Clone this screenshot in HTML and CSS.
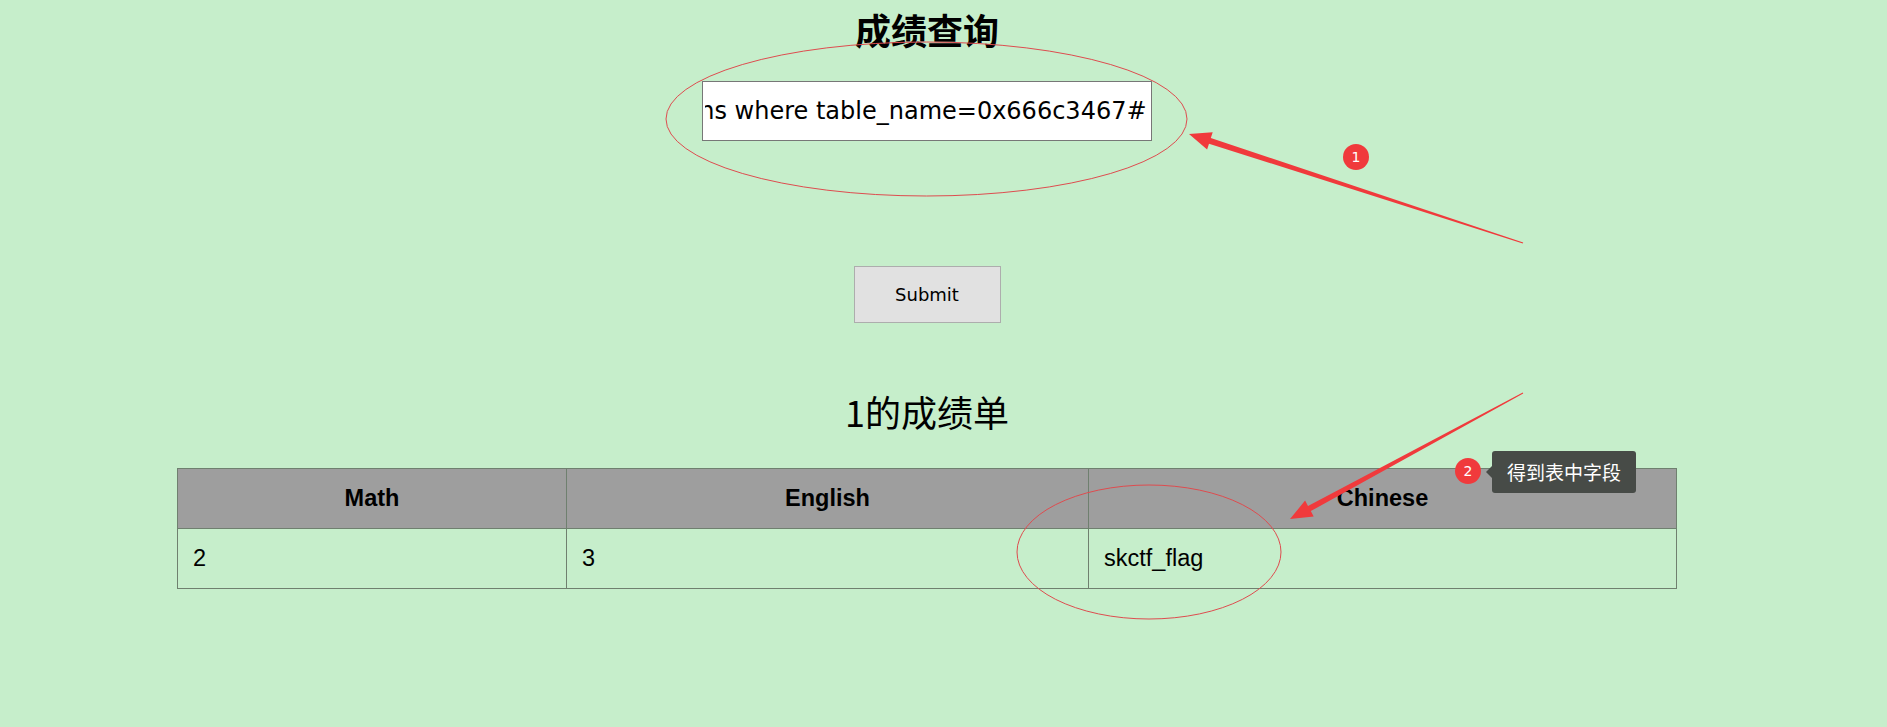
FILE: index.html
```html
<!DOCTYPE html>
<html lang="zh-CN">
<head>
    <meta charset="UTF-8">
    <title>成绩查询</title>
    <link rel="stylesheet" href="styles.css">
</head>
<body>
    <div class="page">
        <h1 class="title">成绩查询</h1>
        <form class="query-form" onsubmit="return false">
            <input type="text" id="query" class="query-input" value="1' union select 1,2,group_concat(column_name) from information_schema.columns where table_name=0x666c3467#">
            <button type="submit" class="submit-btn">Submit</button>
        </form>
        <h2 class="result-title">1的成绩单</h2>
        <table class="scores">
            <colgroup>
                <col class="col-math">
                <col class="col-english">
                <col class="col-chinese">
            </colgroup>
            <tr>
                <th>Math</th>
                <th>English</th>
                <th>Chinese</th>
            </tr>
            <tr>
                <td>2</td>
                <td>3</td>
                <td>skctf_flag</td>
            </tr>
        </table>
    </div>

    <!-- screenshot annotations -->
    <svg class="marks" width="1887" height="727" viewBox="0 0 1887 727">
        <ellipse cx="926.5" cy="119" rx="260.5" ry="77" fill="none" stroke="#de4c4f" stroke-width="1"/>
        <ellipse cx="1149" cy="552" rx="132" ry="67" fill="none" stroke="#de4c4f" stroke-width="1"/>
        <polygon fill="#f03a3c" points="1523.2,242.5 1210.8,138 1212.7,132.2 1189,134 1207.1,149.4 1209,143.7 1522.8,243.5"/>
        <polygon fill="#f03a3c" points="1522.8,392.6 1308,505.9 1305.1,500.6 1290,519 1313.7,516.4 1310.8,511.1 1523.2,393.4"/>
    </svg>
    <span class="badge badge-one">1</span>
    <span class="badge badge-two">2</span>
    <div class="tip">得到表中字段</div>

    <script>
        var q = document.getElementById('query');
        q.scrollLeft = q.scrollWidth;
    </script>
</body>
</html>
```

FILE: styles.css
```css
body {
    margin: 0;
    background-color: #c6eecb;
    color: #000;
    font-family: "Liberation Sans", "Noto Sans CJK SC", sans-serif;
}
.page {
    width: 1854px;
    height: 727px;
    display: flex;
    flex-direction: column;
    align-items: center;
}
.title {
    margin: 7px 0 0;
    font-size: 36px;
    line-height: 44px;
    font-weight: bold;
    font-family: "Noto Sans CJK SC", sans-serif;
}
.query-form {
    display: flex;
    flex-direction: column;
    align-items: center;
}
.query-input {
    margin-top: 30px;
    width: 450px;
    height: 60px;
    box-sizing: border-box;
    padding: 0 4px 0 2px;
    border: 1px solid #777;
    background: #fff;
    font-family: "DejaVu Sans", sans-serif;
    font-size: 24px;
    color: #000;
    outline: none;
}
.submit-btn {
    margin-top: 125px;
    width: 147px;
    height: 57px;
    border: 1px solid #adadad;
    background: #e1e1e1;
    font-family: "DejaVu Sans", sans-serif;
    font-size: 18px;
    color: #000;
}
.result-title {
    margin: 66px 0 0;
    font-size: 36px;
    line-height: 44px;
    font-weight: normal;
    font-family: "Noto Sans CJK SC", sans-serif;
}
.scores {
    margin-top: 35px;
    width: 1499px;
    border-collapse: collapse;
    table-layout: fixed;
    font-size: 23.5px;
}
.col-math { width: 389px; }
.col-english { width: 522px; }
.col-chinese { width: 588px; }
.scores th, .scores td {
    height: 59px;
    padding: 0 15px;
    border: 1px solid #6f806f;
}
.scores th {
    background: #9e9e9e;
    font-weight: bold;
    text-align: center;
}
.scores td {
    text-align: left;
}
.marks {
    position: absolute;
    top: 0;
    left: 0;
    pointer-events: none;
}
.badge {
    position: absolute;
    width: 26px;
    height: 26px;
    border-radius: 50%;
    background: #f03a3c;
    color: #fff;
    font-family: "DejaVu Sans", sans-serif;
    font-size: 14px;
    line-height: 26px;
    text-align: center;
}
.badge-one {
    left: 1343px;
    top: 144px;
}
.badge-two {
    left: 1455px;
    top: 458px;
}
.tip {
    position: absolute;
    left: 1492px;
    top: 451px;
    width: 144px;
    height: 42px;
    border-radius: 3px;
    background: #474b47;
    color: #fff;
    font-family: "Noto Sans CJK SC", sans-serif;
    font-size: 19px;
    line-height: 42px;
    text-align: center;
}
.tip::before {
    content: "";
    position: absolute;
    left: -6px;
    top: 15px;
    border-top: 6px solid transparent;
    border-bottom: 6px solid transparent;
    border-right: 6px solid #474b47;
}
```
